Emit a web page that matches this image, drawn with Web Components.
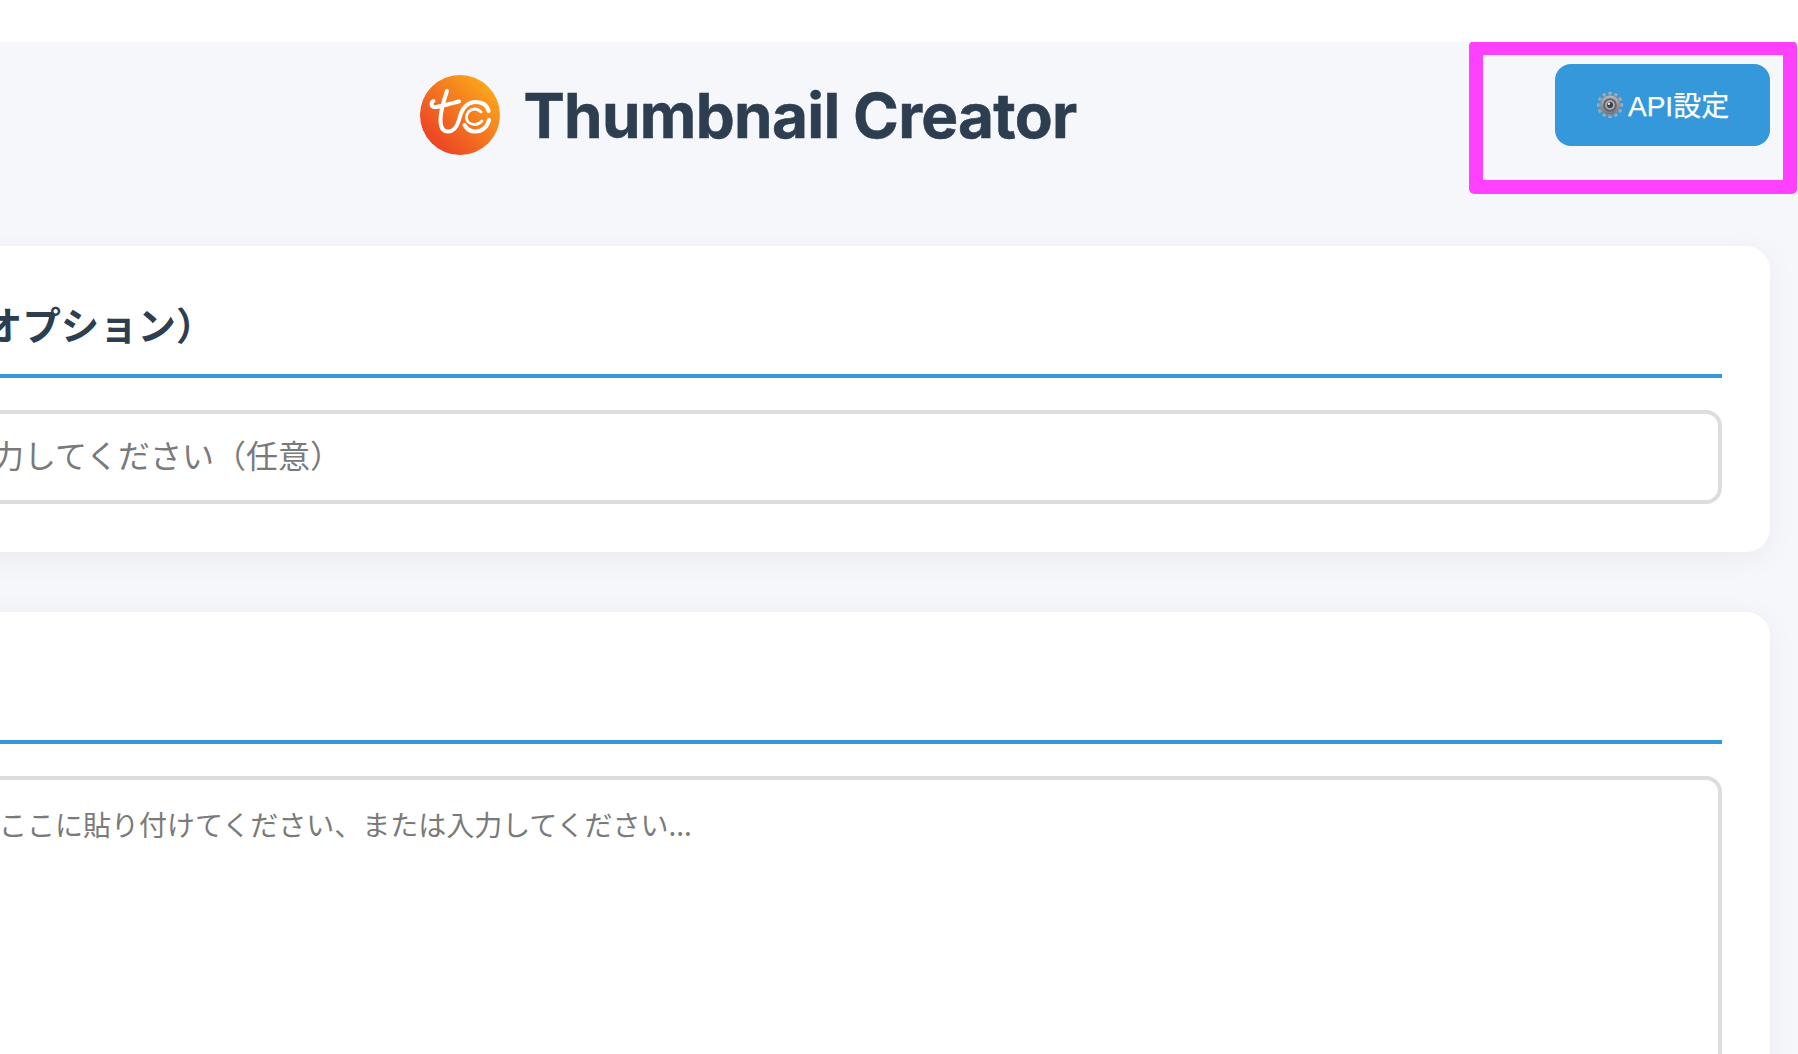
<!DOCTYPE html>
<html lang="ja"><head><meta charset="utf-8"><title>Thumbnail Creator</title>
<style>
html,body{margin:0;height:100%;overflow:hidden;background:#fff}
body{font-family:"Liberation Sans","Noto Sans CJK JP",sans-serif}
</style></head><body>
<app-page>
  <app-header title-text="Thumbnail Creator"></app-header>
  <form-card heading="オプション）" heading-inset="210">
    <fake-field size="32" inset="214" height="86">力してください（任意）</fake-field>
  </form-card>
  <form-card>
    <fake-field size="28" multi inset="221" height="500">ここに貼り付けてください、または入力してください...</fake-field>
  </form-card>
</app-page>
<script>
function shadow(el,html){el.attachShadow({mode:'open'}).innerHTML=html}
customElements.define('app-page',class extends HTMLElement{constructor(){super();shadow(this,`<style>
:host{display:block;height:1012px;margin-top:42px;background:#f6f7fb;overflow:hidden}
main{display:flex;flex-direction:column;gap:60px;width:2044px;margin-left:-274px}
</style><main><slot></slot></main>`)}});
customElements.define('tc-logo',class extends HTMLElement{constructor(){super();shadow(this,`<style>
:host{display:block;width:80px;height:80px;flex:none;margin-top:-2px}svg{display:block}
</style><svg width="80" height="80" viewBox="0 0 80 80"><defs><linearGradient id="g" x1="0.12" y1="0.88" x2="0.9" y2="0.12"><stop offset="0" stop-color="#ec3f26"/><stop offset="1" stop-color="#fbaa1b"/></linearGradient></defs>
<circle cx="40" cy="40" r="40" fill="url(#g)"/>
<g fill="none" stroke="#fff" stroke-linecap="round" stroke-linejoin="round">
<path stroke-width="4" d="M27 16C23.5 26 20.5 35 20.5 45C20.5 52 23 56.5 28 56.5C33 56.5 37 52 39 45C41 36 46 27 56 27C62 27 67 30 68.7 36"/>
<path stroke-width="4" d="M13.5 26C11 27 11 31 13.5 32C17 33 28 29 39 26.5"/>
<path stroke-width="4" d="M69 45C67.5 52 62 56.5 55.5 56.5C50 56.5 46.5 54 44.5 50"/>
<path stroke-width="2.8" d="M61 37C59 35 57 34 55 34C50 34 46.5 38 46.5 42.5C46.5 47 50.5 49.5 55 49.5C58 49.5 60 48 62 46"/>
</g></svg>`)}});
customElements.define('gear-icon',class extends HTMLElement{constructor(){super();
const teeth=Array.from({length:12},(_,i)=>`<rect x="11.3" y="0" width="3.4" height="5.6" rx=".6" transform="rotate(${i*30} 13 13)"/>`).join('');
shadow(this,`<style>:host{display:block;width:26px;height:26px;flex:none}svg{display:block}</style>
<svg width="26" height="26" viewBox="0 0 26 26"><defs><linearGradient id="m" x1="0" y1="0" x2="0" y2="1"><stop offset="0" stop-color="#b4b7bb"/><stop offset="1" stop-color="#72767c"/></linearGradient></defs>
<g fill="url(#m)">${teeth}</g><circle cx="13" cy="13" r="9.6" fill="url(#m)"/><circle cx="13" cy="13" r="6.8" fill="#5f6368"/><circle cx="13" cy="13" r="5" fill="#a4a8ad"/><circle cx="13" cy="13" r="3" fill="#3c3f45"/><circle cx="11.9" cy="11.8" r="1.2" fill="#e4ecf8"/></svg>`)}});
customElements.define('api-button',class extends HTMLElement{constructor(){super();shadow(this,`<style>
:host{display:block}
button{display:flex;align-items:center;gap:5px;box-sizing:border-box;width:215px;height:82px;padding:0 0 2px 42px;border:0;border-radius:16px;background:#3498db;color:#fff;font:400 28px "Liberation Sans","Noto Sans CJK JP",sans-serif;-webkit-text-stroke:.25px #fff}
gear-icon{margin-top:2px}
</style><button><gear-icon></gear-icon><span><slot></slot></span></button>`)}});
customElements.define('app-header',class extends HTMLElement{constructor(){super();shadow(this,`<style>
:host{display:block;position:relative;height:144px}
.brand{display:flex;justify-content:center;align-items:center;gap:23px;padding:33px 0 0 1px}
h1{margin:0;font:700 62px/82px Inter,"Liberation Sans",sans-serif;color:#2c3e50;letter-spacing:-.7px;word-spacing:-.5px;-webkit-text-stroke:.5px #2c3e50}
.act{position:absolute;left:1829px;top:22px}
.hl{position:absolute;left:1743px;top:-1px;width:300px;height:125px;border:14px solid #ff40ff;border-radius:5px;pointer-events:none}
</style><div class="brand"><tc-logo></tc-logo><h1>${this.getAttribute('title-text')}</h1></div>
<div class="act"><api-button>API設定</api-button></div><div class="hl"></div>`)}});
customElements.define('form-card',class extends HTMLElement{constructor(){super();
const t=this.getAttribute('heading')||'',i=this.getAttribute('heading-inset')||0;
shadow(this,`<style>
:host{display:block;box-sizing:border-box;padding:30px 48px 48px;background:#fff;border-radius:24px;box-shadow:0 6px 30px rgba(0,0,0,.05)}
h2{box-sizing:border-box;height:102px;margin:0 0 32px;padding-left:${i}px;border-bottom:4px solid #3498db;font:700 38.4px/94px "Noto Sans CJK JP",sans-serif;color:#2c3e50;white-space:nowrap}
</style><h2>${t}</h2><slot></slot>`)}});
customElements.define('fake-field',class extends HTMLElement{constructor(){super();
const s=this.getAttribute('size'),i=this.getAttribute('inset'),m=this.hasAttribute('multi'),h=this.getAttribute('height');
shadow(this,`<style>
:host{display:block;box-sizing:border-box;height:${+h+8}px;border:4px solid #ddd;border-radius:16px;background:#fff;color:#7a7a7a;white-space:nowrap;
font:400 ${s}px/${m?'40px':(h-6)+'px'} "Noto Sans CJK JP",sans-serif;padding:${m?'24px':'0'} 0 0 ${i}px}
</style><slot></slot>`)}});
</script></body></html>
